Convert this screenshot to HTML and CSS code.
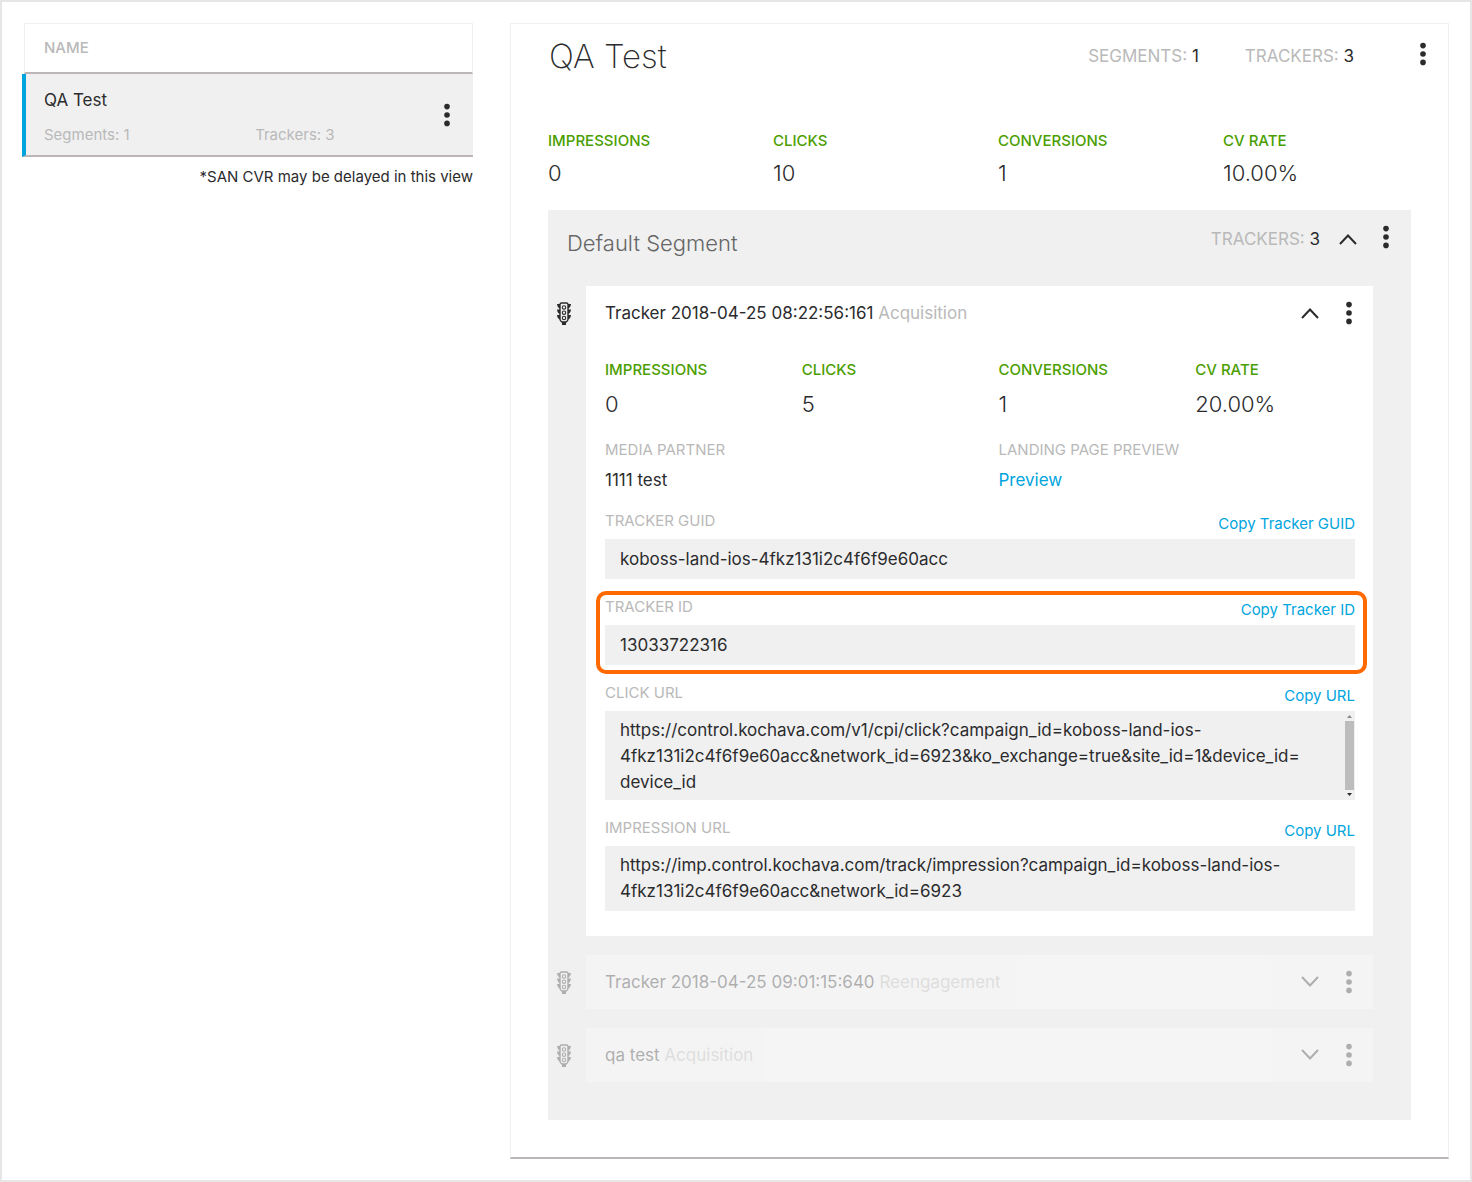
FILE: index.html
```html
<!doctype html>
<html lang="en">
	<head>

		<meta charset="utf-8">
		<meta name="viewport" content="width=device-width, initial-scale=1">

		<title>QA Test</title>

		<link rel="stylesheet" href="styles.css">

	</head>
	<body>

		<!-- Shared icons -->
		<svg class="sprite" aria-hidden="true">
			<symbol id="dots" viewBox="0 0 6 24">
				<circle cx="3" cy="3.6" r="2.8"/>
				<circle cx="3" cy="12" r="2.8"/>
				<circle cx="3" cy="20.4" r="2.8"/>
			</symbol>
			<symbol id="chevron" viewBox="0 0 20 12">
				<path d="M2 11 10 2.500l8 8.500" fill="none" stroke="currentColor" stroke-width="2"/>
			</symbol>
			<symbol id="light" viewBox="0 0 16 24">
				<path d="M1 2h3v4.5C2.300 6 1.300 4.500 1 2zM1 7.500h3V12C2.300 11.500 1.300 10 1 7.500zM1 13h3v4.500C2.300 17 1.300 15.500 1 13zM15 2h-3v4.500c1.700-.5 2.700-2 3-4.500zM15 7.500h-3V12c1.700-.5 2.700-2 3-4.500zM15 13h-3v4.500c1.700-.5 2.700-2 3-4.500z"/>
				<path d="M4 2.500Q4 1 5.500 1h5Q12 1 12 2.500V17q0 2-2 3H6q-2-1-2-3z" fill="none" stroke="currentColor" stroke-width="1.400"/>
				<path d="M6 20h4v3H6z"/>
				<g fill="none" stroke="currentColor" stroke-width="1.100">
					<circle cx="8" cy="5.500" r="1.700"/>
					<circle cx="8" cy="10.700" r="1.700"/>
					<circle cx="8" cy="16" r="1.700"/>
				</g>
			</symbol>
		</svg>

		<div class="page">

			<aside class="sidebar">
				<h2 class="list-head">NAME</h2>
				<div class="campaign">
					<div class="campaign-info">
						<h3 class="campaign-name">QA Test</h3>
						<div class="campaign-counts">
							<span>Segments: 1</span>
							<span>Trackers: 3</span>
						</div>
					</div>
					<button class="icon-button" type="button" aria-label="Campaign menu"><svg class="dots"><use href="#dots"/></svg></button>
				</div>
				<p class="note">*SAN CVR may be delayed in this view</p>
			</aside>

			<main class="panel">

				<header class="panel-head">
					<h1 class="panel-title">QA Test</h1>
					<div class="tools">
						<span class="count">SEGMENTS: <b>1</b></span>
						<span class="count">TRACKERS: <b>3</b></span>
						<button class="icon-button menu" type="button" aria-label="Campaign menu"><svg class="dots"><use href="#dots"/></svg></button>
					</div>
				</header>

				<dl class="metrics">
					<div><dt>IMPRESSIONS</dt><dd>0</dd></div>
					<div><dt>CLICKS</dt><dd>10</dd></div>
					<div><dt>CONVERSIONS</dt><dd>1</dd></div>
					<div><dt>CV RATE</dt><dd>10.00%</dd></div>
				</dl>

				<section class="segment">

					<header class="segment-head">
						<h2 class="segment-title">Default Segment</h2>
						<div class="tools">
							<span class="count">TRACKERS: <b>3</b></span>
							<button class="icon-button" type="button" aria-label="Collapse segment"><svg class="chevron"><use href="#chevron"/></svg></button>
							<button class="icon-button menu" type="button" aria-label="Segment menu"><svg class="dots"><use href="#dots"/></svg></button>
						</div>
					</header>

					<div class="tracker">
						<svg class="light"><use href="#light"/></svg>
						<article class="card">
							<header class="card-head">
								<h3 class="card-title">Tracker 2018-04-25 08:22:56:161 <span>Acquisition</span></h3>
								<div class="tools">
									<button class="icon-button" type="button" aria-label="Collapse tracker"><svg class="chevron"><use href="#chevron"/></svg></button>
									<button class="icon-button" type="button" aria-label="Tracker menu"><svg class="dots"><use href="#dots"/></svg></button>
								</div>
							</header>

							<div class="card-body">
								<dl class="metrics card-metrics">
									<div><dt>IMPRESSIONS</dt><dd>0</dd></div>
									<div><dt>CLICKS</dt><dd>5</dd></div>
									<div><dt>CONVERSIONS</dt><dd>1</dd></div>
									<div><dt>CV RATE</dt><dd>20.00%</dd></div>
								</dl>

								<dl class="details">
									<div><dt>MEDIA PARTNER</dt><dd>1111 test</dd></div>
									<div><dt>LANDING PAGE PREVIEW</dt><dd><a href="#">Preview</a></dd></div>
								</dl>

								<div class="field">
									<div class="field-head">
										<label for="guid">TRACKER GUID</label>
										<button class="copy" type="button">Copy Tracker GUID</button>
									</div>
									<input class="value" id="guid" type="text" value="koboss-land-ios-4fkz131i2c4f6f9e60acc" readonly>
								</div>

								<div class="field highlighted">
									<div class="field-head">
										<label for="tracker-id">TRACKER ID</label>
										<button class="copy" type="button">Copy Tracker ID</button>
									</div>
									<input class="value" id="tracker-id" type="text" value="13033722316" readonly>
								</div>

								<div class="field">
									<div class="field-head">
										<label for="click-url">CLICK URL</label>
										<button class="copy" type="button">Copy URL</button>
									</div>
									<textarea class="value click-url" id="click-url" readonly>https://control.kochava.com/v1/cpi/click?campaign_id=koboss-land-ios-
4fkz131i2c4f6f9e60acc&amp;network_id=6923&amp;ko_exchange=true&amp;site_id=1&amp;device_id=
device_id</textarea>
									<div class="scrollbar" aria-hidden="true">
										<svg class="arrow up" viewBox="0 0 5 3"><path d="M0 3 2.500 0 5 3z"/></svg>
										<div class="thumb"></div>
										<svg class="arrow" viewBox="0 0 5 3"><path d="M0 0 2.500 3 5 0z"/></svg>
									</div>
								</div>

								<div class="field">
									<div class="field-head">
										<label for="impression-url">IMPRESSION URL</label>
										<button class="copy" type="button">Copy URL</button>
									</div>
									<textarea class="value impression-url" id="impression-url" readonly>https://imp.control.kochava.com/track/impression?campaign_id=koboss-land-ios-
4fkz131i2c4f6f9e60acc&amp;network_id=6923</textarea>
								</div>
							</div>
						</article>
					</div>

					<div class="tracker inactive">
						<svg class="light"><use href="#light"/></svg>
						<article class="card">
							<header class="card-head">
								<h3 class="card-title">Tracker 2018-04-25 09:01:15:640 <span>Reengagement</span></h3>
								<div class="tools">
									<button class="icon-button" type="button" aria-label="Expand tracker"><svg class="chevron down"><use href="#chevron"/></svg></button>
									<button class="icon-button" type="button" aria-label="Tracker menu"><svg class="dots"><use href="#dots"/></svg></button>
								</div>
							</header>
						</article>
					</div>

					<div class="tracker inactive">
						<svg class="light"><use href="#light"/></svg>
						<article class="card">
							<header class="card-head">
								<h3 class="card-title">qa test <span>Acquisition</span></h3>
								<div class="tools">
									<button class="icon-button" type="button" aria-label="Expand tracker"><svg class="chevron down"><use href="#chevron"/></svg></button>
									<button class="icon-button" type="button" aria-label="Tracker menu"><svg class="dots"><use href="#dots"/></svg></button>
								</div>
							</header>
						</article>
					</div>

				</section>

			</main>

		</div>

	</body>
</html>
```
FILE: styles.css
```css
/* -------------------------------------------------- */

:root
{
	--text: #2b2b2d;
	--muted: #b9b9b9;
	--grey: #f0f0f0;
	--line: #bbb7b8;
	--green: #4b9e00;
	--blue: #00a5de;
	--orange: #ff6a00;
}

/* -------------------------------------------------- */

*, *::before, *::after { box-sizing: border-box; }

body
{
	margin: 0;

	font-family: Inter , 'Liberation Sans' , sans-serif;
	font-size: 17px;
	line-height: 20px;

	background: white;
	color: var( --text );
}

h1, h2, h3, p, dl, dd
{
	margin: 0;
	font-size: inherit;
	font-weight: 400;
}

a { color: var( --blue ); text-decoration: none; }

button,
input,
textarea
{
	padding: 0;

	font: inherit;
	color: inherit;

	background: none;
	border: none;
	border-radius: 0;
}

button { cursor: pointer; }

svg { fill: currentColor; }

.sprite { position: absolute; width: 0; height: 0; }

/* -------------------------------------------------- */

.page
{
	min-height: 100vh;
	padding: 21px 21px 20px 22px;

	display: grid;
	grid-template-columns: minmax( 0 , 449fr ) minmax( 0 , 939fr );
	gap: 37px;
	align-items: start;

	border: 2px solid #e6e6e6;
}

/* -------------------------------------------------- */

.list-head
{
	padding: 14px 19px;

	font-size: 15px;
	font-weight: 500;

	color: var( --muted );
	border: 1px solid var( --grey );
	border-bottom: 2px solid var( --line );
}

.campaign
{
	margin-left: -2px;
	padding: 16px 14px 10px 18px;

	display: flex;
	align-items: center;

	background: var( --grey );
	border-left: 4px solid var( --blue );
	border-bottom: 2px solid var( --line );
}

.campaign-info { flex-grow: 1; }

.campaign .icon-button { margin-bottom: 6px; }

.campaign-counts
{
	margin-top: 15px;

	display: grid;
	grid-template-columns: 54% 46%;

	font-size: 15px;
	color: var( --muted );
}

.note
{
	margin-top: 10px;
	font-size: 15px;
	text-align: right;
}

/* -------------------------------------------------- */

.panel
{
	padding: 0 0 37px 37px;
	border: 1px solid var( --grey );
	border-bottom: 2px solid var( --line );
}

.panel-head,
.segment-head,
.card-head
{
	display: flex;
	justify-content: space-between;
	align-items: flex-start;
}

.tools
{
	display: flex;
	align-items: center;
}

.count { color: var( --muted ); }
.count b { font-weight: 400; color: var( --text ); }

.icon-button
{
	width: 24px;
	height: 24px;

	display: flex;
	align-items: center;
	justify-content: center;
}

.icon-button.menu { margin-bottom: 4px; }

.dots { width: 6px; height: 24px; }
.chevron { width: 20px; height: 12px; }
.chevron.down { transform: rotate( 180deg ); }

.panel-head { padding: 0 13px 43px 1px; }
.panel-head .tools { height: 64px; }
.panel-head .count { margin-right: 46px; }
.panel-head .count + .count { margin-right: 57px; }

.panel-title
{
	font-size: 33px;
	font-weight: 200;
	line-height: 64px;
}

/* -------------------------------------------------- */

.metrics
{
	display: grid;
	grid-template-columns: repeat( 4 , minmax( 0 , 1fr ) );
}

.metrics dt
{
	font-size: 15px;
	font-weight: 500;
	color: var( --green );
}

.metrics dd
{
	margin-top: 10px;

	font-size: 22px;
	font-weight: 300;
	line-height: 24px;
}

/* -------------------------------------------------- */

.segment
{
	margin: 25px 37px 0 0;
	padding-bottom: 38px;
	background: var( --grey );
}

.segment-head
{
	height: 76px;
	padding: 0 13px 0 19px;
}

.segment-head .tools { height: 58px; }
.segment-head .count { margin-right: 16px; }
.segment-head .icon-button + .icon-button { margin-left: 14px; }

.segment-title
{
	font-size: 22px;
	font-weight: 300;
	line-height: 66px;
	color: #666;
}

/* -------------------------------------------------- */

.tracker
{
	padding-right: 38px;

	display: grid;
	grid-template-columns: 38px minmax( 0 , 1fr );
}

.tracker + .tracker { margin-top: 19px; }

.light
{
	width: 16px;
	height: 24px;
	margin: 16px 0 0 8px;
}

.card { background: white; }

.inactive { opacity: 0.33; }

.card-head
{
	height: 54px;
	padding: 0 12px 0 19px;
	align-items: center;
}

.card-head .icon-button + .icon-button { margin-left: 15px; }

.card-title span { color: var( --muted ); }

.card-body { padding: 20px 18px 25px 19px; }

.card-metrics { margin-right: -37px; }
.card-metrics dd { margin-top: 12px; }

.details
{
	margin: 24px -37px 3px 0;

	display: grid;
	grid-template-columns: repeat( 2 , minmax( 0 , 1fr ) );
}

.details dt
{
	margin-bottom: 10px;
	font-size: 15px;
	color: var( --muted );
}

/* -------------------------------------------------- */

.field { position: relative; }

.field-head
{
	height: 46px;

	display: flex;
	justify-content: space-between;
	align-items: flex-end;

	font-size: 15px;
}

.field-head label
{
	padding-bottom: 8px;
	color: var( --muted );
}

.copy
{
	padding-bottom: 5px;
	color: var( --blue );
}

.value
{
	display: block;
	width: 100%;
	height: 40px;
	padding: 0 15px;

	background: var( --grey );
	outline: none;
	resize: none;
}

textarea.value
{
	padding: 6px 15px;
	line-height: 26px;
	overflow: hidden;
}

textarea.click-url { height: 89px; }
textarea.impression-url { height: 65px; }

.highlighted::after
{
	content: '';

	position: absolute;
	inset: 12px -12px -9px -9px;

	border: 4px solid var( --orange );
	border-radius: 10px;
	pointer-events: none;
}

/* -------------------------------------------------- */

/* Lies over the right edge of the text box */
.scrollbar
{
	position: absolute;
	right: 1px;
	bottom: 0;

	width: 9px;
	height: 89px;
	padding: 4px 0;

	display: flex;
	flex-flow: column nowrap;
	align-items: center;
	gap: 3px;
}

.thumb
{
	flex-grow: 1;
	width: 100%;
	background: #bdbdbd;
}

.arrow { width: 5px; height: 3px; }
.arrow.up { color: #8a8a8a; }

/* -------------------------------------------------- */
```
